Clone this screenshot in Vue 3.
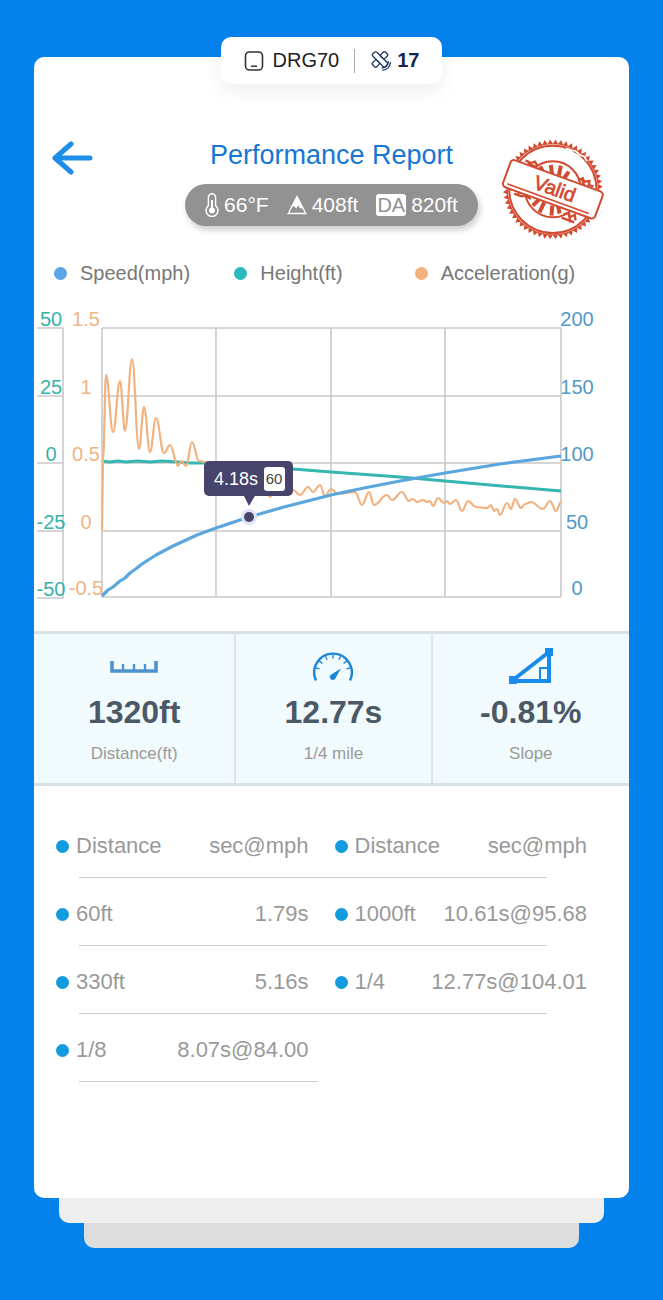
<script setup>
import { ref, computed } from 'vue'

const legend = ref([
  { label: 'Speed(mph)', color: '#5aa5e6' },
  { label: 'Height(ft)', color: '#2cb9bd' },
  { label: 'Acceleration(g)', color: '#f3b27d' }
])

const rows = ref([
  [{ name: '60ft', value: '1.79s' }, { name: '1000ft', value: '10.61s@95.68' }],
  [{ name: '330ft', value: '5.16s' }, { name: '1/4', value: '12.77s@104.01' }],
  [{ name: '1/8', value: '8.07s@84.00' }]
])

const heightTicks = [
  { text: '50', y: 26 },
  { text: '25', y: 94 },
  { text: '0', y: 161 },
  { text: '-25', y: 229 },
  { text: '-50', y: 296 }
]
const accelTicks = [
  { text: '1.5', y: 26 },
  { text: '1', y: 94 },
  { text: '0.5', y: 161 },
  { text: '0', y: 229 },
  { text: '-0.5', y: 295 }
]
const speedTicks = [
  { text: '200', y: 26 },
  { text: '150', y: 94 },
  { text: '100', y: 161 },
  { text: '50', y: 229 },
  { text: '0', y: 295 }
]

const gridY = [28, 96, 163, 231, 297]
const gridX = [68, 182, 297, 411, 527]

const speed = '68,296 74,290 79,287 86,281 91,278 96,273 103,268 108,264 122,255 139,246 163,235 182,228 215,217 250,207 297,195 330,188 366,181 411,173 466,164 527,156'
const height = '68,161 76,162 84,161 92,162 104,161 116,162 128,161 144,162 156,163 170,163 259,169 297,172 366,177 411,181 456,185 527,191'

// turning points of the acceleration curve
const accel = [
  [69, 160], [72, 75], [79, 132], [86, 81], [91, 131], [98, 59], [105, 149], [110, 107],
  [116, 152], [122, 118], [130, 153], [136, 145], [144, 166], [147, 161], [152, 166],
  [158, 142], [165, 161], [171, 162], [190, 180], [233, 190], [236, 197], [240, 188],
  [252, 186], [259, 190], [266, 195], [274, 187], [279, 192], [286, 185], [291, 196],
  [297, 189], [304, 194], [321, 192], [328, 205], [335, 192], [340, 205], [353, 195],
  [358, 200], [368, 192], [375, 201], [379, 199], [383, 202], [389, 200], [393, 202],
  [396, 201], [399, 206], [404, 198], [410, 203], [413, 201], [416, 204], [422, 200],
  [428, 211], [434, 201], [442, 207], [453, 208], [457, 205], [460, 211], [463, 209],
  [466, 215], [473, 203], [477, 209], [481, 199], [487, 208], [491, 204], [497, 202],
  [509, 209], [516, 201], [522, 211], [527, 202]
]

const accelPath = computed(() => {
  let d = 'M68 230 L' + accel[0].join(' ')
  for (let i = 1; i < accel.length; i++) {
    const [x0, y0] = accel[i - 1]
    const [x1, y1] = accel[i]
    const dx = (x1 - x0) * 0.4
    d += ` C${(x0 + dx).toFixed(1)} ${y0} ${(x1 - dx).toFixed(1)} ${y1} ${x1} ${y1}`
  }
  return d
})

// saw-tooth rim of the stamp
const rim = computed(() => {
  const pts = []
  for (let i = 0; i < 112; i++) {
    const a = (i * Math.PI) / 56
    const r = i % 2 ? 150 : 137
    pts.push(`${(188 + r * Math.cos(a)).toFixed(1)},${(177 + r * Math.sin(a)).toFixed(1)}`)
  }
  return pts.join(' ')
})

const gaugeTicks = [-75, -50, -25, 0, 25, 50, 75]
</script>

<template>
  <main class="page">
    <section class="card">
      <div class="device">
        <svg class="device-icon" viewBox="0 0 20 20">
          <rect x="1.5" y="1" width="17" height="18" rx="4" fill="none" stroke="#333" stroke-width="1.6" />
          <path d="M7 15.2h6" stroke="#333" stroke-width="1.5" />
        </svg>
        <span class="device-name">DRG70</span>
        <span class="device-line"></span>
        <svg class="sat-icon" viewBox="0 0 20 20" fill="none" stroke="#1f3763" stroke-width="1.3" stroke-linecap="round" stroke-linejoin="round">
          <g transform="translate(9 8.4) rotate(45)">
            <rect x="-9" y="-2.8" width="18" height="5.6" rx="1.8" />
            <rect x="-2.8" y="-9" width="5.6" height="6.2" rx="1.4" />
            <rect x="-2.8" y="2.8" width="5.6" height="6.2" rx="1.4" />
          </g>
          <path d="M17.2 10.4a6 6 0 0 1-6.2 6.4M19.4 11.6a8 8 0 0 1-7.6 7.6" />
        </svg>
        <span class="sat-count">17</span>
      </div>

      <header class="head">
        <button class="back" type="button" aria-label="Back">
          <svg viewBox="0 0 42 36" fill="none" stroke="#1f8de8" stroke-width="5" stroke-linecap="round" stroke-linejoin="round">
            <path d="M38 18H3M19 4 3 18l16 14" />
          </svg>
        </button>
        <div class="head-main">
          <h1>Performance Report</h1>
          <div class="weather">
            <span class="weather-item">
              <svg class="thermo" viewBox="0 0 14 24" fill="none" stroke="#fff" stroke-width="1.4">
                <path d="M3.4 12.6V4.4a3.6 3.6 0 0 1 7.2 0v8.2a6 6 0 1 1-7.2 0Z" />
                <path d="M7 7v10" stroke-width="2" />
                <circle cx="7" cy="17.4" r="2.2" fill="#fff" />
              </svg>
              66°F
            </span>
            <span class="weather-item">
              <svg class="mountain" viewBox="0 0 20 20">
                <path d="M10 1.5 1.2 18.5h17.6Z" fill="none" stroke="#fff" stroke-width="1.3" />
                <path d="M10 1.5 4.2 13l2.8-2 2.2 2.6 1.9-3.4 1.9 3 2.6.4Z" fill="#fff" />
              </svg>
              408ft
            </span>
            <span class="weather-item"><span class="da">DA</span>820ft</span>
          </div>
        </div>
        <svg class="stamp" viewBox="30 20 320 315" role="img" aria-label="Valid">
          <g fill="none" stroke="#d24a30">
            <polygon :points="rim" fill="#d24a30" stroke="none" />
            <circle cx="188" cy="177" r="135" fill="#fff" stroke="none" />
            <circle cx="188" cy="177" r="131" stroke-width="6" />
            <circle cx="188" cy="177" r="84" stroke-width="6" />
            <path d="M150 108l14 28M182 104l4 30M212 106l-6 30M236 124l-16 22M148 246l14-30M184 256l2-30M208 250l-6-34M128 226l18-18" stroke-width="12" />
            <path d="M106 90l16 8 12-4 8 12M112 100l28 10M264 150l14-6 4 10 16-2-2 12 14 4M266 160l42 18M276 146l8 26M62 178l18 2 6 8 14-4 8 10 12-4M72 190l22 8 12-2 16 10M220 252l14-4 4 12 16-6 2 16M214 262l38 14M236 244l4 32" stroke-width="7" />
            <path d="M228 54l16 6 12 2 12 12 14 4 8 14" stroke="#fff" stroke-width="5" />
          </g>
          <g transform="translate(188 177) rotate(20)">
            <rect x="-147" y="-43" width="294" height="86" rx="11" fill="#fff" stroke="#d24a30" stroke-width="6" />
            <path d="M-134 31H126" stroke="#d24a30" stroke-width="5" />
            <text class="stamp-text" x="5" y="17" text-anchor="middle">Valid</text>
          </g>
        </svg>
      </header>

      <ul class="legend">
        <li v-for="item in legend" :key="item.label">
          <span class="legend-dot" :style="{ background: item.color }"></span>{{ item.label }}
        </li>
      </ul>

      <svg class="chart" viewBox="0 0 595 310">
        <g fill="none" stroke="#c9c9c9" stroke-width="1.6">
          <path d="M3 28H29V298H3M3 96H29M3 163H29M3 231H29" />
          <path v-for="y in gridY" :key="'y' + y" :d="`M68 ${y}H527`" />
          <path v-for="x in gridX" :key="'x' + x" :d="`M${x} 28V297`" />
        </g>
        <g class="tick" text-anchor="middle">
          <text v-for="t in heightTicks" :key="t.text" x="17" :y="t.y" fill="#35b3a9">{{ t.text }}</text>
          <text v-for="t in accelTicks" :key="t.text" x="52" :y="t.y" fill="#efb583">{{ t.text }}</text>
          <text v-for="t in speedTicks" :key="t.text" x="543" :y="t.y" fill="#5499c7">{{ t.text }}</text>
        </g>
        <g fill="none" stroke-linejoin="round">
          <polyline :points="height" stroke="#35b6b0" stroke-width="3" />
          <path :d="accelPath" stroke="#f2b27f" stroke-width="2.2" />
          <polyline :points="speed" stroke="#5ba6dc" stroke-width="3.2" />
        </g>
        <path d="M209 194h13l-7 12Z" fill="#46446a" />
        <rect x="170" y="161" width="89" height="35" rx="5" fill="#46446a" />
        <rect x="230" y="167" width="21" height="24" rx="3" fill="#fff" />
        <text class="tip-time" x="202" y="185" text-anchor="middle">4.18s</text>
        <text class="tip-speed" x="240" y="184" text-anchor="middle">60</text>
        <circle cx="215" cy="217" r="8" fill="#dfe3f3" />
        <circle cx="215" cy="217" r="5" fill="#46446a" />
      </svg>

      <section class="stats">
        <div class="stat">
          <div class="stat-icon">
            <svg width="48" height="13" viewBox="0 0 48 13" fill="none" stroke="#4d92cc">
              <path d="M2 1v10h44V1" stroke-width="3.6" />
              <path d="M13 4v6M24 4v6M35 4v6" stroke-width="2.4" />
            </svg>
          </div>
          <strong>1320ft</strong>
          <span>Distance(ft)</span>
        </div>
        <div class="stat">
          <div class="stat-icon">
            <svg width="40" height="30" viewBox="0 0 40 30" fill="none" stroke="#1c86d8">
              <path d="M3 29.5A18.8 18.8 0 1 1 37 29.5" stroke-width="2.4" />
              <path v-for="a in gaugeTicks" :key="a" d="M20 3.5v4" :transform="`rotate(${a} 20 21.4)`" stroke-width="1.4" />
              <path d="M28 17.5 22.6 27a3 3 0 1 1-4.4-3.6Z" fill="#1c86d8" stroke="none" />
            </svg>
          </div>
          <strong>12.77s</strong>
          <span>1/4 mile</span>
        </div>
        <div class="stat">
          <div class="stat-icon">
            <svg width="44" height="38" viewBox="0 0 44 38" fill="none" stroke="#1a8bea">
              <path d="M4 33 40 5v29H4" stroke-width="4" />
              <path d="M31 33V21h9" stroke-width="2" />
              <path d="M0 29h8v8H0ZM36 1h8v8h-8Z" fill="#1a8bea" stroke="none" />
            </svg>
          </div>
          <strong>-0.81%</strong>
          <span>Slope</span>
        </div>
      </section>

      <table class="results">
        <thead>
          <tr>
            <th class="name" scope="col">Distance</th>
            <th class="value" scope="col">sec@mph</th>
            <th class="name" scope="col">Distance</th>
            <th class="value" scope="col">sec@mph</th>
          </tr>
        </thead>
        <tbody>
          <tr v-for="(row, i) in rows" :key="i" :class="{ half: row.length < 2 }">
            <template v-for="cell in row" :key="cell.name">
              <td class="name">{{ cell.name }}</td>
              <td class="value">{{ cell.value }}</td>
            </template>
          </tr>
        </tbody>
      </table>
    </section>
    <div class="sheet sheet-mid"></div>
    <div class="sheet sheet-low"></div>
  </main>
</template>

<style>
body {
  background-color: #0482ec;
}
</style>

<style scoped>
* {
  margin: 0;
  padding: 0;
  box-sizing: border-box;
}

.page {
  min-height: 100vh;
  padding: 57px 34px 50px;
  background-color: #0482ec;
  font-family: 'Liberation Sans', Arial, sans-serif;
}

.card {
  display: flex;
  flex-direction: column;
  padding-bottom: 116px;
  border-radius: 10px;
  background: #fff;
}

.device {
  display: flex;
  align-items: center;
  align-self: center;
  height: 47px;
  margin-top: -20px;
  padding: 0 23px;
  border-radius: 10px;
  background: #fff;
  box-shadow: 0 6px 20px rgba(0, 0, 0, 0.07);
  font-size: 20px;
}

.device-icon {
  width: 20px;
  height: 22px;
}

.device-name {
  margin: 0 15px 0 9px;
  color: #222;
}

.device-line {
  width: 1px;
  height: 24px;
  background: #aaa;
}

.sat-icon {
  width: 20px;
  height: 20px;
  margin: 0 6px 0 16px;
}

.sat-count {
  color: #14264f;
  font-weight: bold;
}

.head {
  display: grid;
  grid-template-columns: 1fr auto 1fr;
  margin-top: 53px;
  padding: 0 18px;
}

.back {
  justify-self: start;
  width: 42px;
  height: 36px;
  margin-top: 3px;
  border: none;
  background: none;
  cursor: pointer;
}

.back svg {
  display: block;
}

.head-main {
  display: flex;
  flex-direction: column;
  align-items: center;
  white-space: nowrap;
}

h1 {
  color: #1677d2;
  font-size: 27px;
  font-weight: normal;
  line-height: 36px;
}

.weather {
  display: flex;
  align-items: center;
  gap: 18px;
  height: 42px;
  margin-top: 11px;
  padding: 0 20px;
  border-radius: 21px;
  background: #929292;
  box-shadow: 2px 4px 6px rgba(0, 0, 0, 0.2);
  color: #fff;
  font-size: 21px;
}

.weather-item {
  display: flex;
  align-items: center;
  gap: 5px;
}

.thermo {
  width: 14px;
  height: 24px;
}

.mountain {
  width: 20px;
  height: 20px;
}

.da {
  padding: 0 1px;
  border-radius: 3px;
  background: #fff;
  color: #929292;
  font-size: 20px;
  line-height: 22px;
}

.stamp {
  justify-self: end;
  width: 107px;
  height: 105px;
  margin-right: 4px;
}

.stamp-text {
  fill: #d24a30;
  stroke: #d24a30;
  stroke-width: 2px;
  font-size: 60px;
}

.legend {
  display: grid;
  grid-template-columns: repeat(3, 1fr);
  margin-top: 17px;
  padding: 0 34px 0 20px;
  color: #777;
  font-size: 20px;
  line-height: 28px;
  list-style: none;
  white-space: nowrap;
}

.legend li {
  display: flex;
  align-items: center;
  gap: 13px;
}

.legend-dot {
  width: 13px;
  height: 13px;
  border-radius: 50%;
}

.chart {
  display: block;
  width: 100%;
  margin: 13px 0 21px;
}

.tick {
  font-size: 20px;
}

.tip-time {
  fill: #fff;
  font-size: 18px;
}

.tip-speed {
  fill: #444;
  font-size: 15px;
}

.stats {
  display: grid;
  grid-template-columns: 34% 33% 33%;
  border-top: 3px solid #d8e1e6;
  border-bottom: 3px solid #d8e1e6;
  background: #f1fbfd;
}

.stat {
  display: flex;
  flex-direction: column;
  align-items: center;
  padding: 12px 0 17px;
}

.stat:not(:last-child) {
  border-right: 2px solid #dde4e8;
}

.stat-icon {
  display: flex;
  align-items: center;
  height: 40px;
}

.stat strong {
  color: #4b5866;
  font-size: 32px;
  line-height: 52px;
}

.stat span {
  margin-top: 3px;
  color: #999;
  font-size: 17px;
  line-height: 25px;
}

.results {
  display: block;
  margin: 24px 16px 0 22px;
  color: #999;
  font-size: 22px;
  white-space: nowrap;
}

.results thead,
.results tbody {
  display: block;
}

.results tr {
  display: grid;
  grid-template-columns: minmax(0, 19fr) minmax(0, 31fr) minmax(0, 19fr) minmax(0, 31fr);
  align-items: center;
  height: 68px;
  padding-top: 4px;
  background: linear-gradient(#ccc, #ccc) 23px 100% / 84% 1px no-repeat;
}

.results tr.half {
  background-size: 43% 1px;
}

.results th {
  font-weight: normal;
}

.name {
  display: flex;
  align-items: center;
  gap: 7px;
}

.name::before {
  content: '';
  width: 13px;
  height: 13px;
  border-radius: 50%;
  background: #149bdf;
}

.value {
  display: flex;
  justify-content: flex-end;
  padding-right: 26px;
}

.sheet {
  height: 25px;
  border-radius: 0 0 10px 10px;
}

.sheet-mid {
  margin: 0 25px;
  background: #eee;
}

.sheet-low {
  margin: 0 50px;
  background: #ddd;
}
</style>
